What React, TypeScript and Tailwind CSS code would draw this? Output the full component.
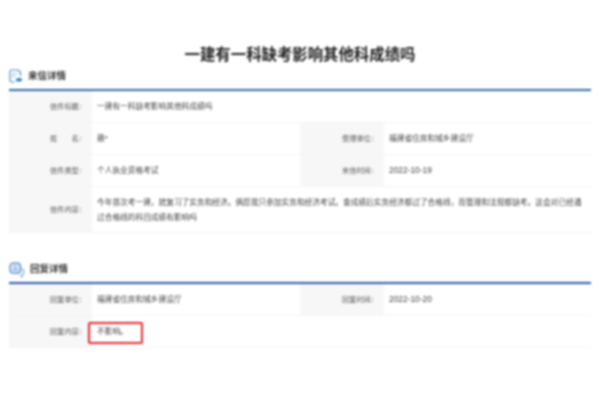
const FONT = 'font-["Liberation_Sans","Noto_Sans_CJK_SC",sans-serif]';

function Label({ text, tall }: { text: string; tall?: boolean }) {
  return (
    <div
      className={`flex items-center justify-end bg-[#f7f7f7] pr-[6px] pt-[1px] text-[7.2px] text-[#555] border-b border-[#f5f5f5] ${
        tall ? 'h-[46px]' : 'h-[32px]'
      }`}
    >
      {text + '\uFF1A'}
    </div>
  );
}

function Value({ children, className = '' }: { children: React.ReactNode; className?: string }) {
  return (
    <div className={`flex items-center pl-[5px] text-[7.7px] text-[#444] border-b border-[#f5f5f5] ${className}`}>
      {children}
    </div>
  );
}

function DocIcon() {
  return (
    <svg width="14" height="14" viewBox="0 0 14 14" fill="none">
      <path d="M9 1H2.2C1.5 1 1 1.5 1 2.2v9.6c0 .7.5 1.2 1.2 1.2H6" stroke="#4a90c8" strokeWidth="1.2" />
      <path d="M9 1l2.5 2.5V7" stroke="#4a90c8" strokeWidth="1.2" />
      <path d="M3 5h5M3 7.5h3" stroke="#8fbfe0" strokeWidth="1" />
      <ellipse cx="10" cy="10.8" rx="3.2" ry="1.8" fill="#2f7fc1" />
    </svg>
  );
}

function ChatIcon() {
  return (
    <svg width="16" height="16" viewBox="0 0 16 16" fill="none">
      <path d="M12.5 6.5c1.4.6 2.4 2 2.4 3.5 0 1.3-.6 2.4-1.6 3.1l-.3 1.7-1.7-1" stroke="#6fa5d8" strokeWidth="1.2" />
      <rect x="1" y="1.2" width="10.5" height="10" rx="3" fill="#dbe9f7" stroke="#4a84c4" strokeWidth="1.2" />
      <path d="M4 7.5h4.5" stroke="#4a84c4" strokeWidth="1" />
      <path d="M5 4.5h2.5" stroke="#4a84c4" strokeWidth="1" />
    </svg>
  );
}

const LETTER =
  '今年首次考一建\uFF0C就复习了实务和经济\u3002俩愿我只参加实务和经济考试\u3002查成绩后实务经济都过了合格线\uFF0C而管理和法规都缺考\u3002这会对已经通过合格线的科目成绩有影响吗';

export default function App() {
  return (
    <div className={`w-[600px] h-[400px] overflow-hidden bg-white px-[9px] pt-[45px] blur-[0.8px] ${FONT}`}>
      <h1 className="h-[20px] text-center text-[15.4px] leading-[20px] font-bold text-[#222]">
        一建有一科缺考影响其他科成绩吗
      </h1>

      {/* 来信详情 */}
      <div className="mt-[1px] flex h-[23px] items-center gap-[5px] pb-[3px]">
        <DocIcon />
        <span className="text-[9.5px] font-bold text-[#333]">来信详情</span>
      </div>
      <div className="h-[2px] bg-[#2f6aa5]" />
      <div className="grid w-[583px] grid-cols-[83px_208px_84px_208px]">
        <Label text="信件标题" />
        <Value className="col-span-3">一建有一科缺考影响其他科成绩吗</Value>
        <Label text={'姓\u2003\u2003名'} />
        <Value>赖*</Value>
        <Label text="受理单位" />
        <Value className="pl-[4px]">福建省住房和城乡建设厅</Value>
        <Label text="信件类型" />
        <Value>个人执业资格考试</Value>
        <Label text="来信时间" />
        <Value className="pl-[4px] text-[8.4px]">2022-10-19</Value>
        <Label tall text="信件内容" />
        <Value className="col-span-3 pr-[8px] leading-[15px]">{LETTER}</Value>
      </div>

      {/* 回复详情 */}
      <div className="mt-[26px] flex h-[23px] items-center gap-[5px] pb-[2px]">
        <ChatIcon />
        <span className="text-[9.5px] font-bold text-[#333]">回复详情</span>
      </div>
      <div className="h-[2px] bg-[#2f58ad]" />
      <div className="grid w-[583px] grid-cols-[83px_208px_84px_208px]">
        <Label text="回复单位" />
        <Value>福建省住房和城乡建设厅</Value>
        <Label text="回复时间" />
        <Value className="pl-[4px] text-[8.4px]">2022-10-20</Value>
        <Label text="回复内容" />
        <Value className="relative col-span-3">
          不影响{'\u3002'}
          <span className="absolute left-[-4px] top-[6px] h-[22px] w-[55px] rounded-[2px] border-2 border-[#e22a2e]" />
        </Value>
      </div>
    </div>
  );
}
